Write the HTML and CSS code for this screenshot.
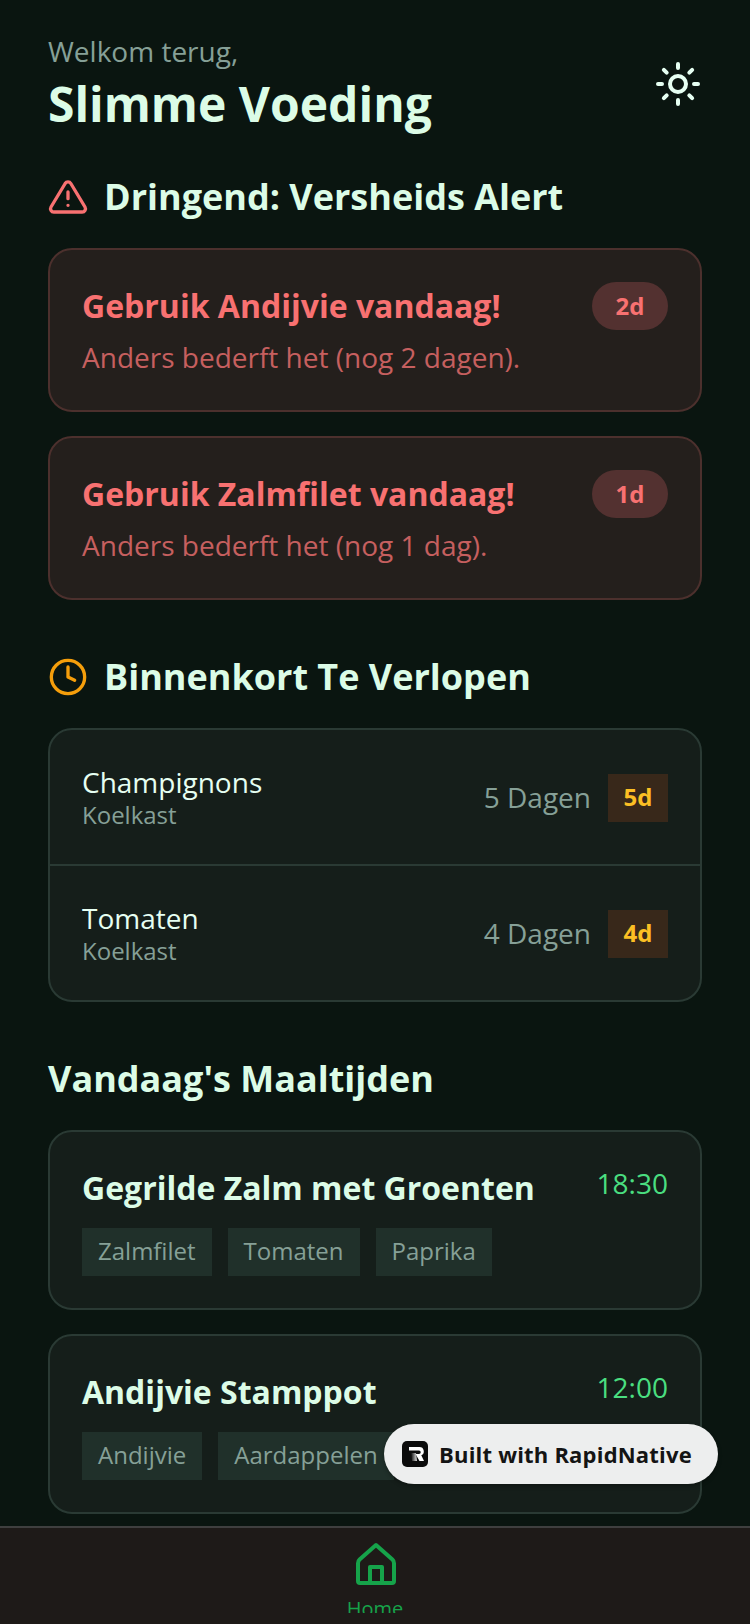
FILE: index.html
```html
<!DOCTYPE html>
<html lang="nl">
<head>
<meta charset="utf-8">
<title>Slimme Voeding</title>
<link rel="stylesheet" href="styles.css">
</head>
<body>
<div class="app">
  <main class="scroll">
    <header class="header">
      <div>
        <p class="welcome">Welkom terug,</p>
        <h1 class="title">Slimme Voeding</h1>
      </div>
      <svg class="sun" viewBox="0 0 24 24" fill="none" stroke="#e6fff2" stroke-width="2" stroke-linecap="round"><circle cx="12" cy="12" r="4"/><path d="M12 2v2M12 20v2M4.930 4.930l1.410 1.410M17.660 17.660l1.410 1.410M2 12h2M20 12h2M6.340 17.660l-1.410 1.410M19.070 4.930l-1.410 1.410"/></svg>
    </header>

    <section class="section section-alert">
      <h2 class="section-title">
        <svg class="section-icon" viewBox="0 0 24 24" fill="none" stroke="#f87171" stroke-width="2" stroke-linecap="round" stroke-linejoin="round"><path d="M10.300 3.900 1.800 18a2 2 0 0 0 1.700 3h17a2 2 0 0 0 1.700-3L13.700 3.900a2 2 0 0 0-3.400 0z"/><path d="M12 9v4M12 17h.01"/></svg>
        Dringend: Versheids Alert
      </h2>
      <article class="alert">
        <div class="alert-row">
          <h3 class="alert-title">Gebruik Andijvie vandaag!</h3>
          <span class="alert-pill">2d</span>
        </div>
        <p class="alert-text">Anders bederft het (nog 2 dagen).</p>
      </article>
      <article class="alert">
        <div class="alert-row">
          <h3 class="alert-title">Gebruik Zalmfilet vandaag!</h3>
          <span class="alert-pill">1d</span>
        </div>
        <p class="alert-text">Anders bederft het (nog 1 dag).</p>
      </article>
    </section>

    <section class="section section-soon">
      <h2 class="section-title">
        <svg class="section-icon" viewBox="0 0 24 24" fill="none" stroke="#f59e0b" stroke-width="2" stroke-linecap="round" stroke-linejoin="round"><circle cx="12" cy="12" r="10"/><path d="M12 6v6l4 2"/></svg>
        Binnenkort Te Verlopen
      </h2>
      <div class="list">
        <div class="list-row">
          <div>
            <div class="item-name">Champignons</div>
            <div class="item-place">Koelkast</div>
          </div>
          <div class="item-right">
            <span class="item-days">5 Dagen</span>
            <span class="item-pill">5d</span>
          </div>
        </div>
        <div class="list-row">
          <div>
            <div class="item-name">Tomaten</div>
            <div class="item-place">Koelkast</div>
          </div>
          <div class="item-right">
            <span class="item-days">4 Dagen</span>
            <span class="item-pill">4d</span>
          </div>
        </div>
      </div>
    </section>

    <section class="section section-meals">
      <h2 class="section-title">Vandaag's Maaltijden</h2>
      <article class="meal">
        <div class="meal-row">
          <h3 class="meal-title">Gegrilde Zalm met Groenten</h3>
          <span class="meal-time">18:30</span>
        </div>
        <div class="tags">
          <span class="tag">Zalmfilet</span>
          <span class="tag">Tomaten</span>
          <span class="tag">Paprika</span>
        </div>
      </article>
      <article class="meal">
        <div class="meal-row">
          <h3 class="meal-title">Andijvie Stamppot</h3>
          <span class="meal-time">12:00</span>
        </div>
        <div class="tags">
          <span class="tag">Andijvie</span>
          <span class="tag">Aardappelen</span>
        </div>
      </article>
    </section>
  </main>

  <nav class="tabbar">
    <svg class="tab-icon" viewBox="0 0 24 24" fill="none" stroke="#16a34a" stroke-width="2" stroke-linecap="round" stroke-linejoin="round"><path d="M12 1.500 20.200 8.800Q21 9.500 21 10.600V19.500a1 1 0 0 1-1 1H4a1 1 0 0 1-1-1V10.600Q3 9.500 3.800 8.800z"/><path d="M9 20.500V12.500h6v8"/></svg>
    <div class="tab-label-clip"><span class="tab-label">Home</span></div>
  </nav>

  <div class="built">
    <svg class="built-logo" viewBox="0 0 26 26"><defs><linearGradient id="stem" x1="0" x2="1" y1="0" y2="0"><stop offset="0" stop-color="#0b0b0b"/><stop offset="1" stop-color="#ddd"/></linearGradient></defs><rect width="26" height="26" rx="5" fill="#0b0b0b"/><path d="M7 6h10.500a4.300 4.300 0 0 1 1.800 8.200L22 20h-4.500l-4-7h3.500a1.700 1.700 0 0 0 0-3.500H7z" fill="#fff"/><path d="M9 12h5l1 8h-5z" fill="url(#stem)"/></svg>
    <span class="built-text">Built with RapidNative</span>
  </div>
</div>
</body>
</html>
```

FILE: styles.css
```css
* { box-sizing: border-box; margin: 0; padding: 0; }

html, body { width: 750px; height: 1624px; overflow: hidden; }

body {
  font-family: "Open Sans", "Noto Sans", sans-serif;
  background: #0a1510;
}

.app {
  position: relative;
  display: flex;
  flex-direction: column;
  width: 750px;
  height: 1624px;
  overflow: hidden;
}

.scroll {
  flex: 1;
  min-height: 0;
  overflow: hidden;
  padding: 32px 48px 0;
}

.header {
  display: flex;
  justify-content: space-between;
  align-items: center;
}

.welcome {
  font-size: 28px;
  line-height: 38px;
  color: #86a097;
}

.title {
  margin-top: 4px;
  font-size: 48px;
  line-height: 60px;
  font-weight: 700;
  color: #dcfce7;
}

.sun { width: 48px; height: 48px; margin-top: 2px; }

.section-alert { margin-top: 38px; }
.section-soon { margin-top: 52px; }
.section-meals { margin-top: 52px; }

.section-title {
  display: flex;
  align-items: center;
  gap: 16px;
  font-size: 36px;
  line-height: 50px;
  font-weight: 700;
  color: #dcfce7;
  margin-bottom: 26px;
}

.section-icon { width: 40px; height: 40px; flex: none; }

.alert {
  background: #241f1c;
  border: 2px solid #4c302d;
  border-radius: 24px;
  padding: 32px;
  height: 164px;
  margin-bottom: 24px;
}

.alert-row {
  display: flex;
  justify-content: space-between;
  align-items: center;
}

.alert-title {
  font-size: 32px;
  line-height: 48px;
  font-weight: 700;
  color: #f87171;
}

.alert-pill {
  width: 76px;
  height: 48px;
  padding-bottom: 2px;
  border-radius: 24px;
  background: #533130;
  color: #f87171;
  font-size: 24px;
  font-weight: 700;
  display: flex;
  align-items: center;
  justify-content: center;
}

.alert-text {
  margin-top: 7px;
  font-size: 28px;
  line-height: 40px;
  color: #c65f5f;
}

.list {
  background: #151e1a;
  border: 2px solid #2a3a34;
  border-radius: 24px;
}

.list-row {
  display: flex;
  justify-content: space-between;
  align-items: center;
  height: 134px;
  padding: 1px 32px 0;
}

.list-row + .list-row {
  height: 136px;
  border-top: 2px solid #2a3a34;
}

.item-name {
  font-size: 28px;
  line-height: 34px;
  color: #e6fff2;
}

.item-place {
  font-size: 24px;
  line-height: 32px;
  color: #86a097;
}

.item-right {
  display: flex;
  align-items: center;
  gap: 17px;
}

.item-days {
  padding-bottom: 2px;
  font-size: 28px;
  color: #86a097;
}

.item-pill {
  width: 60px;
  height: 48px;
  padding-bottom: 2px;
  background: #38281a;
  color: #fbbf24;
  font-size: 24px;
  font-weight: 700;
  display: flex;
  align-items: center;
  justify-content: center;
}

.meal {
  background: #151e1a;
  border: 2px solid #2a3a34;
  border-radius: 24px;
  padding: 32px;
  height: 180px;
  margin-bottom: 24px;
}

.meal-row {
  display: flex;
  justify-content: space-between;
  align-items: flex-start;
}

.meal-title {
  font-size: 32px;
  line-height: 48px;
  font-weight: 700;
  color: #dcfce7;
}

.meal-time {
  margin-top: -1px;
  font-size: 28px;
  line-height: 40px;
  color: #4ade80;
}

.tags {
  display: flex;
  gap: 16px;
  margin-top: 16px;
}

.tag {
  height: 48px;
  padding: 0 16px;
  background: #20302a;
  color: #86a097;
  font-size: 24px;
  line-height: 46px;
}

.tabbar {
  flex: none;
  height: 98px;
  background: #1e1a18;
  border-top: 2px solid #3f3f3f;
  display: flex;
  flex-direction: column;
  align-items: center;
  padding-top: 14px;
}

.tab-icon { width: 48px; height: 48px; flex: none; margin-left: 2px; }

.tab-label-clip {
  height: 16px;
  margin-top: 7px;
  overflow: hidden;
}

.tab-label {
  display: block;
  font-size: 20px;
  line-height: 24px;
  color: #16a34a;
}

.built {
  position: absolute;
  left: 384px;
  top: 1424px;
  width: 334px;
  height: 60px;
  border-radius: 30px;
  background: #edeeee;
  box-shadow: 0 2px 4px rgba(0, 0, 0, 0.3);
  display: flex;
  align-items: center;
  gap: 11px;
  padding-left: 18px;
}

.built-logo { width: 26px; height: 26px; flex: none; }

.built-text {
  font-size: 22px;
  letter-spacing: 0.2px;
  font-weight: 700;
  color: #141414;
}
```
